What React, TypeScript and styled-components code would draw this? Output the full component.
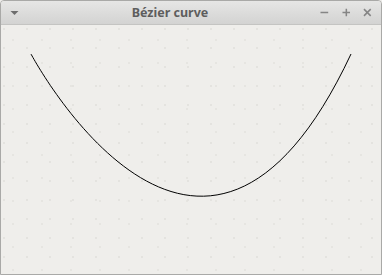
import React from 'react';
import styled, { createGlobalStyle } from 'styled-components';

const GlobalStyle = createGlobalStyle`
  html, body {
    margin: 0;
    padding: 0;
    background: #efeeeb;
  }
`;

const Window = styled.div`
  width: 382px;
  height: 275px;
  box-sizing: border-box;
  border: 1px solid #a9a9a7;
  border-radius: 4px 4px 0 0;
  display: flex;
  flex-direction: column;
  overflow: hidden;
  font-family: "Noto Sans", "Open Sans", sans-serif;
`;

const TitleBar = styled.div`
  height: 23px;
  flex: none;
  display: grid;
  grid-template-columns: 28px 1fr 70px;
  align-items: center;
  background: linear-gradient(#e6e6e5, #d3d3d2);
  border-bottom: 1px solid #c4c4c2;
`;

const Title = styled.div`
  text-align: center;
  font-size: 12.5px;
  font-weight: 700;
  color: #5e5e5e;
`;

const Controls = styled.div<{ $align: string }>`
  display: flex;
  justify-content: ${p => p.$align};
  align-items: center;
  gap: 13px;
  padding: 0 9px 0 9px;
`;

const Canvas = styled.div`
  flex: 1;
  background-color: #efeeeb;
  background-image:
    radial-gradient(circle at 3px 4px, #e3e2de 0.7px, transparent 1.1px),
    radial-gradient(circle at 12px 15px, #e5e4e0 0.7px, transparent 1.1px);
  background-size: 23px 19px, 29px 23px;
`;

const Icon = ({ d, fill }: { d: string; fill?: boolean }) => (
  <svg width="9" height="9" viewBox="0 0 9 9">
    <path d={d} fill={fill ? '#6d6d6d' : 'none'} stroke={fill ? 'none' : '#858585'} strokeWidth="1.6" />
  </svg>
);

export default function App() {
  return (
    <>
      <GlobalStyle />
      <Window>
        <TitleBar>
          <Controls $align="flex-start">
            <Icon d="M0.5 3 L8.5 3 L4.5 7 Z" fill />
          </Controls>
          <Title>Bézier curve</Title>
          <Controls $align="flex-end">
            <Icon d="M0.5 4.5 L8.5 4.5" />
            <Icon d="M0.5 4.5 L8.5 4.5 M4.5 0.5 L4.5 8.5" />
            <Icon d="M1 1 L8 8 M8 1 L1 8" />
          </Controls>
        </TitleBar>
        <Canvas>
          <svg width="380" height="250" viewBox="0 0 380 250">
            <path d="M30 29 C30 29 200 349 350 29" fill="none" stroke="#000" strokeWidth="1" />
          </svg>
        </Canvas>
      </Window>
    </>
  );
}
